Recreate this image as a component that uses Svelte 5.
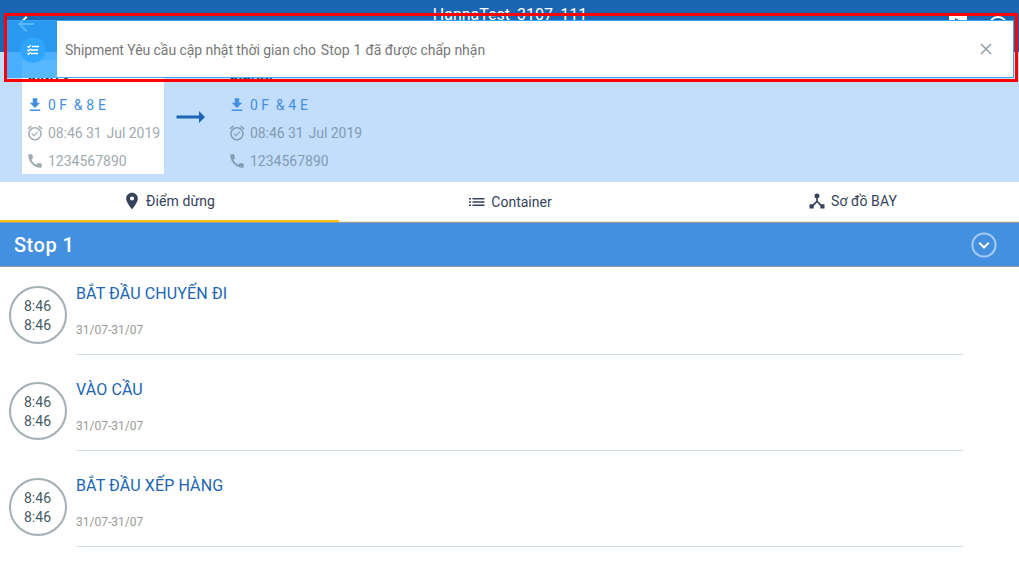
<script lang="ts">
  const ports = [
    { name: 'DINH V', load: '0 F', empty: '& 8 E', active: true },
    { name: 'DICHAI', load: '0 F', empty: '& 4 E', active: false }
  ];
  const events = ['BẮT ĐẦU CHUYẾN ĐI', 'VÀO CẦU', 'BẮT ĐẦU XẾP HÀNG'];
</script>

<main>
  <header>
    <svg class="back" viewBox="0 0 24 24"><path d="M20 11H7.83l5.59-5.59L12 4l-8 8 8 8 1.41-1.41L7.83 13H20z" /></svg>
    <h1>HannaTest_3107_111</h1>
    <div class="tools">
      <svg viewBox="0 0 24 24"><path d="M3 3h18v18H3z M9 5v14l6 2V8z" fill-rule="evenodd" /></svg>
      <svg viewBox="0 0 24 24"><path d="M12 3a10 10 0 1 0 0 20 10 10 0 0 0 0-20zm0 18a8 8 0 1 1 0-16 8 8 0 0 1 0 16zm-2-14h4v2h-4z" /></svg>
    </div>
  </header>

  <section class="route">
    {#each ports as port, i}
      {#if i > 0}
        <svg class="arrow" viewBox="0 0 30 14"><path d="M0.5 5.4H23V1L29 7l-6 6V8.600H0.500z" /></svg>
      {/if}
      <article class:active={port.active}>
        <strong>{port.name}</strong>
        <p class="cargo"><svg viewBox="0 0 24 24"><path d="M19 9h-4V3H9v6H5l7 7 7-7zM5 18v2h14v-2H5z" /></svg><span class="full">{port.load}</span><span class="empty">{port.empty}</span></p>
        <p><svg viewBox="0 0 24 24"><path d="M22 5.720l-4.600-3.860-1.290 1.530 4.600 3.860L22 5.720zM7.880 3.390L6.600 1.860 2 5.710l1.290 1.530 4.590-3.850zM12 4c-4.970 0-9 4.030-9 9s4.020 9 9 9a9 9 0 0 0 0-18zm0 16c-3.870 0-7-3.130-7-7s3.130-7 7-7 7 3.130 7 7-3.130 7-7 7zm-1.460-5.470L8.410 12.400l-1.060 1.060 3.180 3.180 6-6-1.060-1.060-4.930 4.950z" /></svg><span class="time">08:46 31</span><span class="date">Jul 2019</span></p>
        <p><svg viewBox="0 0 24 24"><path d="M20.010 15.380c-1.230 0-2.420-.2-3.530-.56-.35-.12-.74-.03-1.010.24l-1.570 1.970c-2.830-1.350-5.480-3.900-6.890-6.830l1.950-1.660c.27-.28.35-.67.24-1.020-.37-1.110-.56-2.300-.56-3.530 0-.54-.45-.99-.99-.99H4.190C3.650 3 3 3.240 3 3.990 3 13.280 10.730 21 20.010 21c.71 0 .99-.63.99-1.180v-3.450c0-.54-.45-.99-.99-.99z" /></svg><span>1234567890</span></p>
      </article>
    {/each}
  </section>

  <nav>
    <div class="tab selected"><svg viewBox="0 0 24 24"><path d="M12 2C8.130 2 5 5.130 5 9c0 5.250 7 13 7 13s7-7.750 7-13c0-3.870-3.130-7-7-7zm0 9.500a2.500 2.500 0 1 1 0-5 2.500 2.500 0 0 1 0 5z" /></svg><span>Điểm dừng</span></div>
    <div class="tab container"><svg viewBox="0 0 20 20"><path d="M2 6h2v1.500H2zm3.500 0h12v1.500h-12zM2 9.200h2v1.500H2zm3.500 0h12v1.500h-12zM2 12.400h2v1.500H2zm3.500 0h12v1.500h-12z" /></svg><span>Container</span></div>
    <div class="tab bay"><svg viewBox="0 0 24 24"><path d="M17 16l-4-4V8.820C14.160 8.400 15 7.300 15 6a3 3 0 1 0-6 0c0 1.300.84 2.400 2 2.820V12l-4 4H3v5h5v-3.050l4-4.200 4 4.200V21h5v-5h-4z" /></svg><span>Sơ đồ BAY</span></div>
  </nav>

  <section class="stop">
    <h2>Stop 1</h2>
    <svg viewBox="0 0 26 26"><circle cx="13" cy="13" r="11.600" /><path d="m8.300 10.800 4.700 4.700 4.700-4.700" /></svg>
  </section>

  <ul>
    {#each events as event}
      <li>
        <div class="clock"><span>8:46</span><span>8:46</span></div>
        <div class="event"><h3>{event}</h3><time>31/07-31/07</time></div>
      </li>
    {/each}
  </ul>

  <div class="highlight">
    <div class="toast">
      <div class="badge">
        <svg viewBox="0 0 26 26"><circle cx="13" cy="13" r="12.700" /><path d="M12 9.500h7M11 13h7M11 16.500h7M7.500 9.200l1 1 2.500-2M7.500 12.700l1 1 2.500-2M7.500 16.200l1 1 2.500-2" /></svg>
      </div>
      <p><span class="message">Shipment Yêu cầu cập nhật thời gian cho</span><span class="target">Stop 1</span><span class="result">đã được chấp nhận</span></p>
      <svg class="close" viewBox="0 0 12 12"><path d="m1 1 10 10M11 1 1 11" /></svg>
    </div>
  </div>
</main>

<style>
  :global(body) { margin: 0; background: #fff; }
  * { box-sizing: border-box; }
  main { position: relative; width: 1019px; height: 568px; overflow: hidden; font-family: Roboto, sans-serif; background: #fff; }
  h1, h2, h3, p, ul { margin: 0; padding: 0; font-weight: 400; }
  svg { display: block; flex: none; fill: currentColor; }
  header { height: 52px; background: #1b65b2; color: #fff; display: grid; grid-template-columns: 100px 1fr 100px; align-items: start; }
  .back { width: 24px; height: 24px; margin: 12px 0 0 14px; }
  h1 { font-size: 16px; line-height: 20px; padding: 5px 0 0 1px; text-align: center; letter-spacing: -.02px; }
  .tools { display: flex; gap: 16px; padding: 13px 0 0 27px; }
  .tools svg { width: 24px; height: 24px; }
  .route { height: 130px; background: #c3ddfd; padding: 8px 22px; display: flex; }
  article { width: 142px; height: 114px; padding: 8px 0 0 4px; color: #829bb1; }
  article.active { background: #fff; color: #9eabaf; }
  strong { display: block; height: 23px; padding-left: 2px; font-size: 13px; line-height: 16px; color: #26384d; }
  article p { display: flex; align-items: center; height: 28px; font-size: 14px; white-space: nowrap; }
  article p svg { width: 18px; height: 18px; margin-right: 4px; }
  article .cargo { color: #438fe0; }
  .full { margin-right: 7px; letter-spacing: -.1px; }
  .empty { letter-spacing: .2px; }
  .time { letter-spacing: -.07px; margin-right: 5px; }
  .date { letter-spacing: -.03px; }
  .arrow { width: 30px; height: 14px; margin: 50px 18px 0 12px; color: #1b65b2; }
  nav { height: 40px; display: grid; grid-template-columns: 339px 341px 339px; border-bottom: 1px solid #e6e6e6; }
  .tab { height: 40px; display: flex; align-items: center; justify-content: center; gap: 4px; font-size: 14px; color: #35435a; padding-bottom: 2px; }
  .tab svg { width: 20px; height: 20px; }
  .selected { border-bottom: 2px solid #ffc107; padding: 0 2px 0 0; letter-spacing: .1px; }
  .container { padding-bottom: 0; }
  .bay { padding-left: 5px; letter-spacing: .08px; }
  .stop { height: 45px; border-top: 1px solid #999; border-bottom: 1px solid #999; background: #438fe0; color: #fff; padding: 0 22px 0 14px; display: flex; align-items: center; justify-content: space-between; }
  h2 { font-size: 20px; font-weight: 500; letter-spacing: .5px; }
  .stop svg { width: 26px; height: 26px; fill: none; stroke: #fff; stroke-width: 2; }
  .stop circle { stroke: #a6caf2; }
  ul { list-style: none; }
  li { height: 96px; padding-left: 9px; display: flex; }
  .clock { width: 58px; height: 58px; margin: 19px 9px 0 0; padding: 2px 1px 0 0; border: 2px solid #a4afb3; border-radius: 50%; display: flex; flex-direction: column; align-items: center; justify-content: center; font-size: 14px; line-height: 19px; color: #455a64; }
  .event { width: 887px; height: 88px; border-bottom: 1px solid #d0dde5; padding-top: 17px; }
  h3 { color: #1b65b2; font-size: 16px; line-height: 20px; letter-spacing: .12px; }
  time { display: block; font-size: 12px; line-height: 16px; margin-top: 18px; color: #999; }
  .highlight { position: absolute; left: 4px; top: 13px; width: 1014px; height: 69px; border: 3px solid #f00; padding: 4px 1px 1px 0; }
  .toast { width: 1007px; height: 58px; border: 1px solid #3da4f5; border-left: 0; display: flex; align-items: center; }
  .badge {
    width: 50px; height: 58px; display: grid; place-items: center;
    background:
      linear-gradient(#57b7ff, #57b7ff) 15px 40px / 35px 18px no-repeat,
      linear-gradient(rgba(45,165,255,.8) 32px, #4bafff 32px);
  }
  .badge svg { width: 26px; height: 26px; margin: 1px 0 0 1px; fill: #2fa5ff; }
  .badge path { fill: none; stroke: #fff; stroke-width: 1.400; }
  .toast p { flex: 1; height: 56px; padding: 2px 0 0 8px; background: #fff; display: flex; align-items: center; font-size: 14px; color: #777; white-space: nowrap; }
  .message { letter-spacing: -.06px; }
  .target { margin: 0 4px 0 5px; letter-spacing: .1px; }
  .result { letter-spacing: -.02px; }
  .close { width: 12px; height: 12px; box-sizing: content-box; padding: 22px 21px; background: #fff; fill: none; stroke: #91a0a6; stroke-width: 1.500; }
</style>
